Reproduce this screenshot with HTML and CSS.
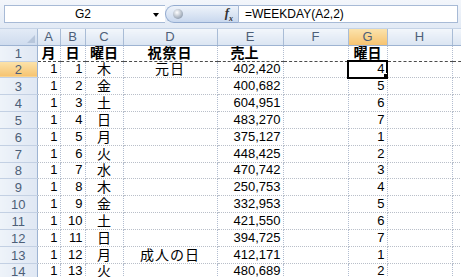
FILE: index.html
```html
<!DOCTYPE html>
<html lang="ja">
<head>
    <meta charset="UTF-8">
    <title>WEEKDAY</title>
    <link rel="stylesheet" href="styles.css">
</head>
<body>

    <div class="formula-bar">
        <div class="name-box">
            <span class="name">G2</span>
            <span class="drop"></span>
        </div>
        <div class="fx-box">
            <span class="knob"></span>
            <span class="fx">f<sub>x</sub></span>
        </div>
        <div class="formula">=WEEKDAY(A2,2)</div>
    </div>

    <div class="sheet-wrap">
        <table class="sheet">
            <colgroup>
                <col class="c-rh">
                <col class="c-a">
                <col class="c-b">
                <col class="c-c">
                <col class="c-d">
                <col class="c-e">
                <col class="c-f">
                <col class="c-g">
                <col class="c-h">
                <col class="c-i">
            </colgroup>
            <thead>
                <tr>
                    <th class="corner"><span class="tri"></span></th>
                    <th>A</th><th>B</th><th>C</th><th>D</th><th>E</th><th>F</th>
                    <th class="sel">G</th><th>H</th><th></th>
                </tr>
            </thead>
            <tbody>
                <tr class="title">
                    <th>1</th><td>月</td><td>日</td><td>曜日</td><td>祝祭日</td><td class="uri">売上</td><td></td><td class="wd">曜日</td><td></td><td></td>
                </tr>
                <tr>
                    <th class="sel">2</th><td>1</td><td>1</td><td>木</td><td>元日</td><td>402,420</td><td></td><td class="active">4</td><td></td><td></td>
                </tr>
                <tr>
                    <th>3</th><td>1</td><td>2</td><td>金</td><td></td><td>400,682</td><td></td><td>5</td><td></td><td></td>
                </tr>
                <tr>
                    <th>4</th><td>1</td><td>3</td><td>土</td><td></td><td>604,951</td><td></td><td>6</td><td></td><td></td>
                </tr>
                <tr>
                    <th>5</th><td>1</td><td>4</td><td>日</td><td></td><td>483,270</td><td></td><td>7</td><td></td><td></td>
                </tr>
                <tr>
                    <th>6</th><td>1</td><td>5</td><td>月</td><td></td><td>375,127</td><td></td><td>1</td><td></td><td></td>
                </tr>
                <tr>
                    <th>7</th><td>1</td><td>6</td><td>火</td><td></td><td>448,425</td><td></td><td>2</td><td></td><td></td>
                </tr>
                <tr>
                    <th>8</th><td>1</td><td>7</td><td>水</td><td></td><td>470,742</td><td></td><td>3</td><td></td><td></td>
                </tr>
                <tr>
                    <th>9</th><td>1</td><td>8</td><td>木</td><td></td><td>250,753</td><td></td><td>4</td><td></td><td></td>
                </tr>
                <tr>
                    <th>10</th><td>1</td><td>9</td><td>金</td><td></td><td>332,953</td><td></td><td>5</td><td></td><td></td>
                </tr>
                <tr>
                    <th>11</th><td>1</td><td>10</td><td>土</td><td></td><td>421,550</td><td></td><td>6</td><td></td><td></td>
                </tr>
                <tr>
                    <th>12</th><td>1</td><td>11</td><td>日</td><td></td><td>394,725</td><td></td><td>7</td><td></td><td></td>
                </tr>
                <tr>
                    <th>13</th><td>1</td><td>12</td><td>月</td><td>成人の日</td><td>412,171</td><td></td><td>1</td><td></td><td></td>
                </tr>
                <tr>
                    <th>14</th><td>1</td><td>13</td><td>火</td><td></td><td>480,689</td><td></td><td>2</td><td></td><td></td>
                </tr>
            </tbody>
        </table>
    </div>

</body>
</html>
```

FILE: styles.css
```css
* {
    padding: 0;
    margin: 0;
    box-sizing: border-box;
}

body {
    width: 461px;
    height: 277px;
    overflow: hidden;
    background-color: #fff;
    font-family: "Liberation Sans", "Noto Sans CJK JP", sans-serif;
    color: #000;
}

/* formula bar */

.formula-bar {
    height: 29px;
    display: flex;
    align-items: flex-start;
    padding: 5px 3px 0 4px;
    background: linear-gradient(#f3f6fb, #e2eaf5);
    border-bottom: 1px solid #c5d3e6;
}

.name-box {
    width: 161px;
    height: 18px;
    display: flex;
    align-items: center;
    background-color: #fff;
    border: 1px solid #a7bad6;
    border-right: none;
}

.name {
    flex: 1;
    text-align: center;
    font-size: 12px;
    padding-left: 8px;
}

.drop {
    width: 0;
    height: 0;
    margin: 1px 6px 0 0;
    border-left: 3px solid transparent;
    border-right: 3px solid transparent;
    border-top: 4px solid #000;
}

.fx-box {
    width: 73px;
    height: 18px;
    display: flex;
    align-items: center;
    justify-content: space-between;
    padding: 0 5px 0 7px;
    border: 1px solid #93abd0;
    border-right: none;
    border-radius: 9px 0 0 9px;
    background: linear-gradient(#eef3fa, #c9d8ee);
}

.knob {
    width: 10px;
    height: 10px;
    border-radius: 50%;
    background: radial-gradient(circle at 40% 35%, #fff, #9aa6b6 70%);
}

.fx {
    font-family: "Liberation Serif", serif;
    font-style: italic;
    font-weight: bold;
    font-size: 13px;
    color: #333;
}

.fx sub {
    font-size: 8px;
}

.formula {
    flex: 1;
    height: 18px;
    line-height: 16px;
    padding-left: 6px;
    font-size: 12px;
    background-color: #fff;
    border: 1px solid #a7bad6;
}

/* grid */

.sheet-wrap {
    width: 461px;
    overflow: hidden;
}

.sheet {
    table-layout: fixed;
    border-collapse: collapse;
    width: 517px;
}

.c-rh { width: 37px; }
.c-a { width: 23px; }
.c-b { width: 25px; }
.c-c { width: 38px; }
.c-d { width: 94px; }
.c-e { width: 66px; }
.c-f { width: 65px; }
.c-g { width: 39px; }
.c-h { width: 65px; }
.c-i { width: 65px; }

.sheet thead tr {
    height: 16px;
}

.sheet thead th {
    font-weight: normal;
    font-size: 13px;
    line-height: 14px;
    color: #4d5f78;
    background: linear-gradient(#f2f6fb, #dbe5f2);
    border-right: 1px solid #a9bcd6;
    border-bottom: 1px solid #9db3d2;
}

.sheet thead th.sel {
    background: linear-gradient(#fbe3ac, #f6c370);
    color: #4d5f78;
}

.corner {
    position: relative;
    background: linear-gradient(#e3ebf6, #cfdcee) !important;
}

.tri {
    position: absolute;
    right: 2px;
    bottom: 2px;
    width: 0;
    height: 0;
    border-left: 8px solid transparent;
    border-bottom: 8px solid #b7c6db;
}

.sheet tbody tr {
    height: 16.85px;
}

.sheet tbody tr.title {
    height: 15px;
}

.sheet tbody th {
    font-weight: normal;
    font-size: 13px;
    line-height: 14px;
    color: #4d5f78;
    text-align: center;
    vertical-align: bottom;
    background: linear-gradient(90deg, #eef3f9, #dfe7f3);
    border-right: 1px solid #9db3d2;
    border-bottom: 1px solid #c3d0e3;
}

.sheet tbody th.sel {
    background: linear-gradient(#fbe3ac, #f6c370);
}

.sheet td {
    font-size: 13px;
    line-height: 14px;
    padding: 0 2px 1px;
    vertical-align: bottom;
    text-align: right;
    white-space: nowrap;
    overflow: hidden;
    border-right: 1px dotted #b2bdd0;
    border-bottom: 1px dotted #b9bfc9;
}

/* kanji columns */
.sheet td:nth-child(4),
.sheet td:nth-child(5) {
    text-align: center;
    font-size: 14px;
}

.sheet td:nth-child(5) {
    letter-spacing: 1px;
}

.title td {
    font-weight: bold;
    font-size: 14px;
    text-align: center;
    border-bottom: 1px dashed #4b4b4b;
}

.title td.uri {
    text-align: left;
    padding-left: 13px;
}

.title td.wd {
    border-bottom: 1px solid #000;
}

.active {
    position: relative;
    outline: 2px solid #000;
    outline-offset: -1px;
}

.active::after {
    content: "";
    position: absolute;
    right: -3px;
    bottom: -3px;
    width: 5px;
    height: 5px;
    background-color: #000;
    border: 1px solid #fff;
}
```
